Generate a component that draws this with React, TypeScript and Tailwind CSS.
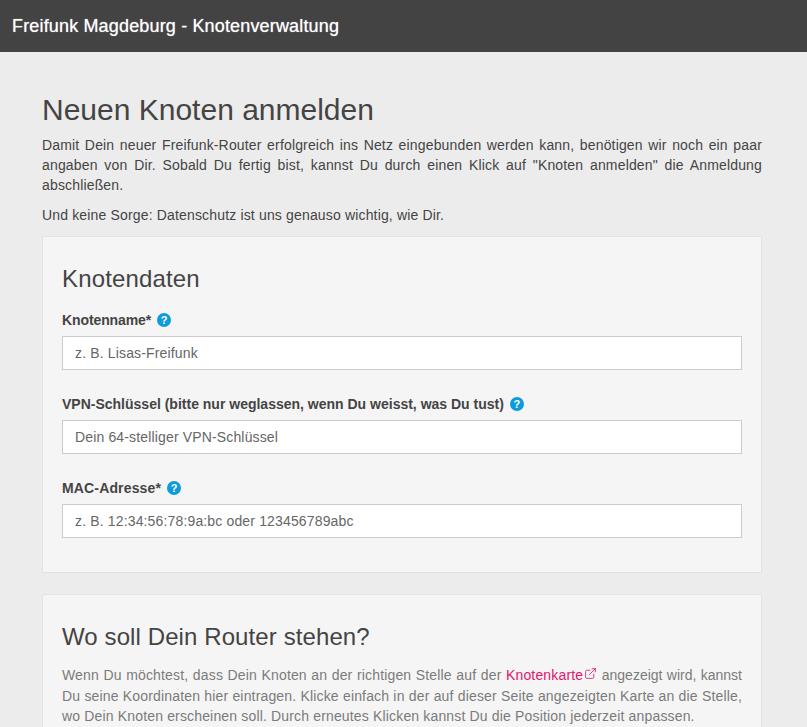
import { ExternalLink } from 'lucide-react'

function HelpIcon() {
  return (
    <span className="ml-[6px] inline-flex h-[14px] w-[14px] items-center justify-center rounded-full bg-[#0d9bdc] text-[11px] font-bold leading-none text-white">
      ?
    </span>
  )
}

function Field({ label, placeholder, labelClass }: { label: string; placeholder: string; labelClass: string }) {
  return (
    <div className="mb-6">
      <label className={`flex h-5 items-center font-bold ${labelClass}`}>
        {label}
        <HelpIcon />
      </label>
      <input
        readOnly
        placeholder={placeholder}
        className="mt-[6px] block h-[34px] w-full border border-[#cccccc] bg-white px-3 text-[14px] tracking-[0.15px] placeholder:text-[#666666]"
      />
    </div>
  )
}

export default function App() {
  return (
    <div className="h-[727px] overflow-hidden bg-[#ececec] font-['Liberation_Sans',Arial,sans-serif] text-[14px] leading-5 tracking-[0.16px] text-[#444444]">
      <header className="flex h-[52px] items-center bg-[#434343] px-3 text-[18px] tracking-[0.16px] text-white [text-shadow:0_0_1px_rgba(255,255,255,0.7)]">
        Freifunk Magdeburg - Knotenverwaltung
      </header>

      <main className="px-[42px] pr-[45px] pt-[40px]">
        <h1 className="text-[30px] leading-[36px] tracking-normal">Neuen Knoten anmelden</h1>
        <p className="mt-[7px] text-justify">
          Damit Dein neuer Freifunk-Router erfolgreich ins Netz eingebunden werden kann, benötigen wir noch ein paar
          angaben von Dir. Sobald Du fertig bist, kannst Du durch einen Klick auf "Knoten anmelden" die Anmeldung
          abschließen.
        </p>
        <p className="mt-[10px]">Und keine Sorge: Datenschutz ist uns genauso wichtig, wie Dir.</p>

        <section className="mt-[11px] h-[337px] border border-[#e3e3e3] bg-[#f5f5f5] px-[19px] pt-[27px]">
          <h2 className="text-[24px] leading-[30px] tracking-[0.15px]">Knotendaten</h2>
          <div className="mt-[16px]">
            <Field label="Knotenname*" labelClass="tracking-[-0.1px]" placeholder="z. B. Lisas-Freifunk" />
            <Field
              label="VPN-Schlüssel (bitte nur weglassen, wenn Du weisst, was Du tust)"
              labelClass="tracking-normal"
              placeholder="Dein 64-stelliger VPN-Schlüssel"
            />
            <Field label="MAC-Adresse*" labelClass="tracking-[0.15px]" placeholder="z. B. 12:34:56:78:9a:bc oder 123456789abc" />
          </div>
        </section>

        <section className="mt-[21px] border border-[#e3e3e3] bg-[#f5f5f5] px-[19px] pt-[27px] pb-5">
          <h2 className="text-[24px] leading-[30px] tracking-[0.1px]">Wo soll Dein Router stehen?</h2>
          <p className="mt-[13px] text-justify text-[#7b7b7b]">
            Wenn Du möchtest, dass Dein Knoten an der richtigen Stelle auf der{' '}
            <a className="text-[#e6126b]">
              Knotenkarte
              <ExternalLink className="mb-[6px] ml-[1px] inline h-[13px] w-[13px]" strokeWidth={1.5} />
            </a>{' '}
            <span className="tracking-normal">angezeigt wird, kannst</span> Du seine Koordinaten hier eintragen. Klicke
            einfach in der auf dieser Seite angezeigten Karte an die Stelle, wo Dein Knoten erscheinen soll. Durch erneutes
            Klicken kannst Du die Position jederzeit anpassen.
          </p>
        </section>
      </main>
    </div>
  )
}
